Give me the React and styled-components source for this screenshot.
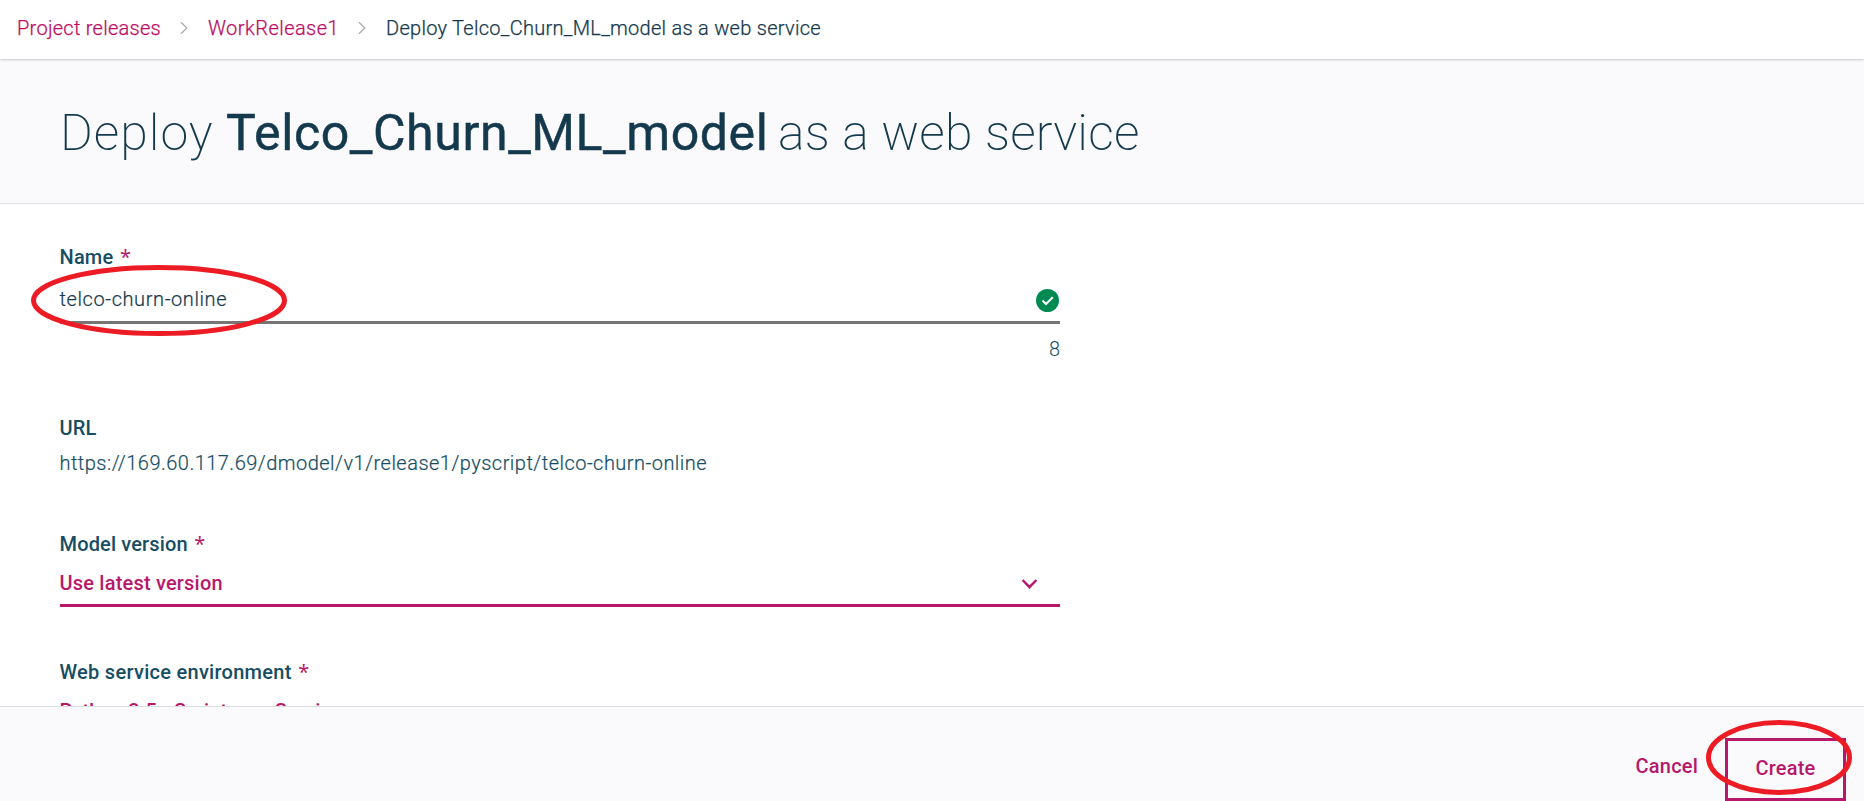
import React from "react";
import styled, { createGlobalStyle } from "styled-components";

const ink = "#14394d";
const label = "#164d63";
const magenta = "#b8186b";

const GlobalStyle = createGlobalStyle`
  * { box-sizing: border-box; }
  body {
    margin: 0;
    background: #fff;
    color: ${ink};
    font-family: Roboto, "Liberation Sans", sans-serif;
    font-size: 20px;
    line-height: 24px;
  }
`;

const Page = styled.div`
  position: relative;
  display: flex;
  flex-direction: column;
  height: 100vh;
  overflow: hidden;
`;

const Breadcrumbs = styled.nav`
  position: relative;
  z-index: 1;
  flex: none;
  display: flex;
  height: 59px;
  padding: 16px 0 0 17px;
  background: #fff;
  box-shadow: 0 1px 2px 0 rgba(50, 50, 60, 0.26);
  font-weight: 300;
  -webkit-text-stroke: 0.25px;
  white-space: nowrap;
`;

const Crumb = styled.span`
  flex: none;
  width: ${(p) => p.$width}px;
  color: ${(p) => (p.$link ? "#bd0a63" : ink)};
  letter-spacing: ${(p) => p.$tracking}px;
`;

const CrumbArrow = styled.svg`
  flex: none;
  width: 8px;
  height: 14px;
  margin: 5px 20px 0;
  fill: none;
  stroke: #a9aeb2;
  stroke-width: 1.3;
`;

const Header = styled.header`
  flex: none;
  height: 145px;
  padding: 44px 0 0 60px;
  background: #fafafc;
  border-bottom: 1px solid #dfe0e2;
`;

const Title = styled.h1`
  display: flex;
  margin: 0;
  font-size: 50px;
  line-height: 60px;
  font-weight: 200;
  white-space: nowrap;
`;

const TitlePart = styled.span`
  width: ${(p) => p.$width}px;
  letter-spacing: ${(p) => p.$tracking}px;
`;

const ModelName = styled(TitlePart)`
  font-weight: 400;
  -webkit-text-stroke: 0.5px;
`;

const Form = styled.main`
  flex: 1;
  min-height: 0;
  overflow: hidden;
  padding: 41px 0 0 60px;
`;

const Field = styled.section`
  width: 1000px;
  margin-bottom: ${(p) => p.$gap}px;
  text-indent: -0.5px;
`;

const Label = styled.div`
  display: flex;
  gap: 7px;
  color: ${label};
  font-weight: 500;
  letter-spacing: ${(p) => p.$tracking}px;
`;

const Required = styled.span`
  color: ${magenta};
  font-family: "Noto Sans", sans-serif;
  font-weight: 400;
`;

const TextInput = styled.div`
  display: flex;
  justify-content: space-between;
  height: 55px;
  padding: 18px 0 0;
  border-bottom: 3px solid #767676;
  font-weight: 300;
  -webkit-text-stroke: 0.2px;
  letter-spacing: 0.6px;
`;

const ValidMark = styled.svg`
  width: 24px;
  height: 24px;
  margin-top: 1px;
`;

const Counter = styled.div`
  margin-top: 13px;
  margin-bottom: -1px;
  color: ${label};
  font-weight: 300;
  text-align: right;
`;

const Url = styled.div`
  margin-top: 11px;
  color: ${label};
  font-weight: 300;
  -webkit-text-stroke: 0.2px;
  letter-spacing: 0.475px;
`;

const Select = styled.div`
  display: flex;
  justify-content: space-between;
  height: 51px;
  padding: 15px 22px 0 0;
  border-bottom: 3px solid ${magenta};
  color: ${magenta};
  font-weight: 500;
  letter-spacing: ${(p) => p.$tracking}px;
`;

const Chevron = styled.svg`
  width: 17px;
  height: 12px;
  margin-top: 7px;
  fill: none;
  stroke: ${magenta};
  stroke-width: 2.4;
`;

const Footer = styled.footer`
  flex: none;
  display: flex;
  justify-content: flex-end;
  align-items: flex-end;
  gap: 27px;
  height: 95px;
  padding-right: 18px;
  background: #fafafc;
  border-top: 1px solid #dcdee0;
`;

const Button = styled.button`
  border: 0;
  padding: 0;
  background: transparent;
  color: ${magenta};
  font: 500 20px/24px Roboto, "Liberation Sans", sans-serif;
  letter-spacing: 0.2px;
`;

const CancelButton = styled(Button)`
  height: 47px;
  padding-bottom: 23px;
`;

const CreateButton = styled(Button)`
  width: 121px;
  height: 63px;
  padding-bottom: 3px;
  border: 3px solid ${magenta};
`;

const Ring = styled.svg`
  position: absolute;
  z-index: 2;
  left: ${(p) => p.$x}px;
  top: ${(p) => p.$y}px;
  fill: none;
  stroke: #ed1c24;
  stroke-width: 5;
  pointer-events: none;
`;

function Highlight({ x, y, width, height }) {
  return (
    <Ring $x={x} $y={y} width={width} height={height}>
      <ellipse cx={width / 2} cy={height / 2} rx={width / 2 - 2.5} ry={height / 2 - 2.5} />
    </Ring>
  );
}

function Arrow() {
  return (
    <CrumbArrow viewBox="0 0 8 14">
      <path d="M1 1.2 6.8 7 1 12.8" />
    </CrumbArrow>
  );
}

function Caption({ children, required, tracking = 0.2 }) {
  return (
    <Label $tracking={tracking}>
      {children}
      {required && <Required>*</Required>}
    </Label>
  );
}

function Dropdown({ value, tracking }) {
  return (
    <Select $tracking={tracking}>
      <span>{value}</span>
      <Chevron viewBox="0 0 17 12">
        <path d="M1.6 2 8.5 9.2 15.4 2" />
      </Chevron>
    </Select>
  );
}

export default function App() {
  return (
    <Page>
      <GlobalStyle />
      <Breadcrumbs>
        <Crumb $link $width={143} $tracking={0.27}>Project releases</Crumb>
        <Arrow />
        <Crumb $link $width={130} $tracking={0.46}>WorkRelease1</Crumb>
        <Arrow />
        <Crumb $width={440} $tracking={0.28}>Deploy Telco_Churn_ML_model as a web service</Crumb>
      </Breadcrumbs>
      <Header>
        <Title>
          <TitlePart $width={166} $tracking={1}>Deploy</TitlePart>
          <ModelName $width={552} $tracking={0.6}>Telco_Churn_ML_model</ModelName>
          <TitlePart $width={364} $tracking={0.2}>as a web service</TitlePart>
        </Title>
      </Header>
      <Form>
        <Field $gap={56}>
          <Caption required>Name</Caption>
          <TextInput>
            <span>telco-churn-online</span>
            <ValidMark viewBox="0 0 24 24">
              <circle cx="11.5" cy="12.5" r="11.5" fill="#008a52" />
              <path d="M6.5 12.5 10 16 16.8 9.2" fill="none" stroke="#fff" strokeWidth="2" />
            </ValidMark>
          </TextInput>
          <Counter>8</Counter>
        </Field>
        <Field $gap={57}>
          <Caption>URL</Caption>
          <Url>https://169.60.117.69/dmodel/v1/release1/pyscript/telco-churn-online</Url>
        </Field>
        <Field $gap={53}>
          <Caption required tracking={0.15}>Model version</Caption>
          <Dropdown value="Use latest version" tracking={0.2} />
        </Field>
        <Field $gap={0}>
          <Caption required tracking={0.28}>Web service environment</Caption>
          <Dropdown value="Python 3.5 - Script as a Service" tracking={0.12} />
        </Field>
      </Form>
      <Footer>
        <CancelButton>Cancel</CancelButton>
        <CreateButton>Create</CreateButton>
      </Footer>
      <Highlight x={31} y={265} width={256} height={71} />
      <Highlight x={1706} y={720} width={146} height={75} />
    </Page>
  );
}
